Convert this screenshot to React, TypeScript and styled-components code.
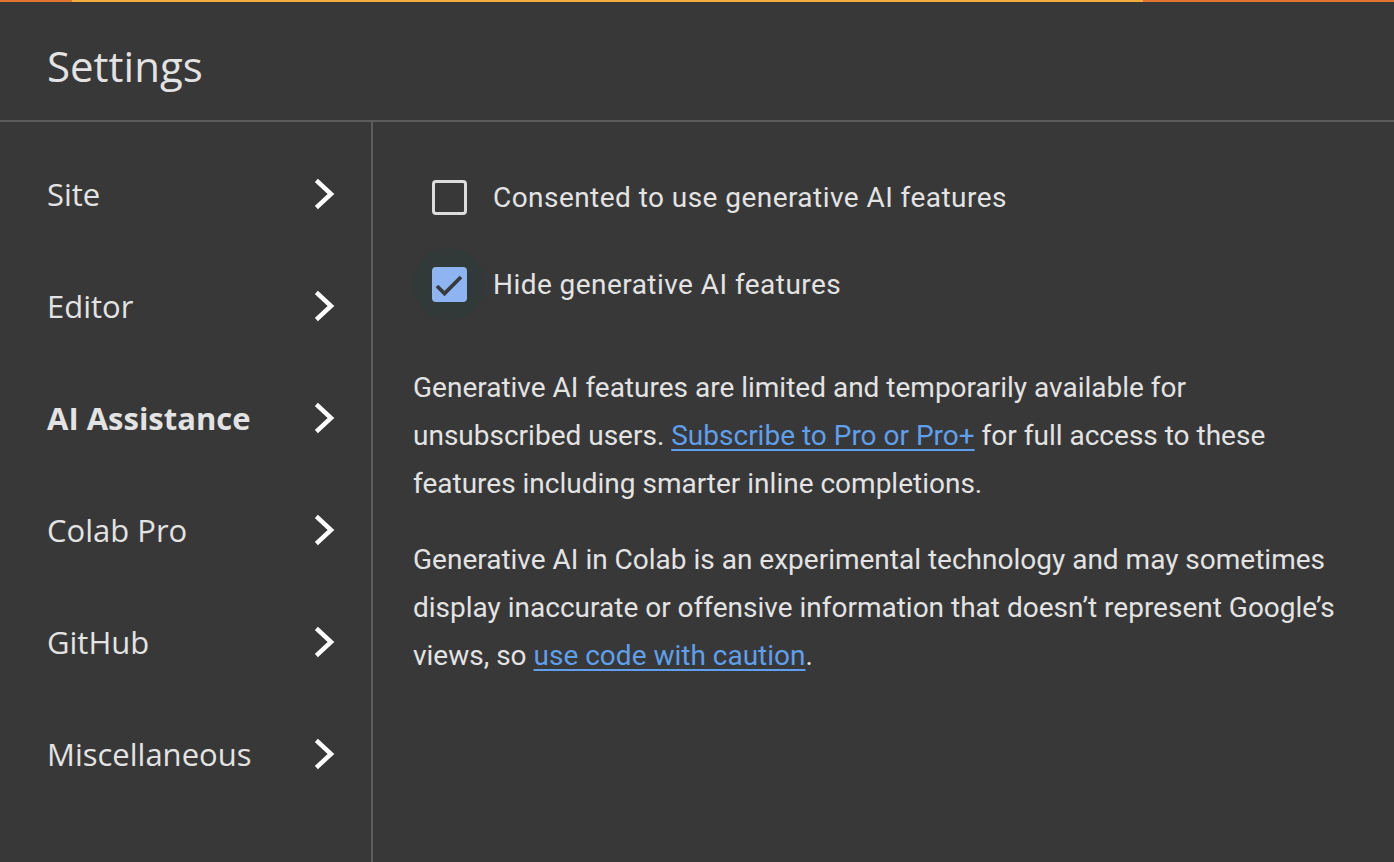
import React from 'react'
import styled, { createGlobalStyle } from 'styled-components'

const GlobalStyle = createGlobalStyle`
    html, body {
        margin: 0;
        padding: 0;
        background: #383838;
    }
    body {
        font-family: Roboto, "Liberation Sans", sans-serif;
        color: #e3e3e3;
    }
`

const Page = styled.div`
    display: flex;
    flex-direction: column;
    width: 1394px;
    height: 862px;
    overflow: hidden;
    background: #383838;
`

const TopBar = styled.div`
    display: flex;
    height: 2px;
    flex-shrink: 0;
`

const BarSegment = styled.div<{ $color: string; $width?: number }>`
    background: ${(p) => p.$color};
    ${(p) => (p.$width ? `width: ${p.$width}px;` : 'flex: 1;')}
`

const Header = styled.header`
    display: flex;
    align-items: center;
    height: 120px;
    box-sizing: border-box;
    padding: 8px 0 0 47px;
    border-bottom: 2px solid #5c5c5c;
    flex-shrink: 0;
`

const Title = styled.h1`
    margin: 0;
    font-family: "Open Sans", sans-serif;
    font-size: 42px;
    font-weight: 400;
    color: #e3e3e3;
`

const Body = styled.div`
    display: flex;
    flex: 1;
`

const Sidebar = styled.nav`
    display: flex;
    flex-direction: column;
    width: 373px;
    padding-top: 16px;
    border-right: 2px solid #5c5c5c;
    box-sizing: border-box;
    flex-shrink: 0;
`

const NavItem = styled.div<{ $active?: boolean }>`
    display: flex;
    align-items: center;
    justify-content: space-between;
    height: 112px;
    padding: 0 36px 0 47px;
    font-family: "Open Sans", sans-serif;
    font-size: 31px;
    font-weight: ${(p) => (p.$active ? 700 : 400)};
    color: #e3e3e3;
`

const Content = styled.main`
    display: flex;
    flex-direction: column;
    padding: 39px 40px 0 40px;
    flex: 1;
`

const CheckRow = styled.label`
    display: flex;
    align-items: center;
    height: 72px;
    gap: 8px;
    margin-bottom: 15px;
    font-size: 28px;
    color: #e3e3e3;
    letter-spacing: 0.45px;
`

const Ripple = styled.span<{ $hover?: boolean }>`
    display: flex;
    align-items: center;
    justify-content: center;
    width: 72px;
    height: 72px;
    border-radius: 50%;
    background: ${(p) => (p.$hover ? '#313939' : 'transparent')};
`

const Box = styled.span<{ $checked?: boolean }>`
    display: flex;
    align-items: center;
    justify-content: center;
    width: 35px;
    height: 35px;
    box-sizing: border-box;
    border-radius: 4px;
    border: ${(p) => (p.$checked ? 'none' : '3.5px solid #dcdcdc')};
    background: ${(p) => (p.$checked ? '#8fb4f2' : 'transparent')};
`

const Paragraph = styled.p`
    margin: 0 0 28px;
    font-size: 28px;
    line-height: 48px;
    color: #e3e3e3;
`

const FirstParagraph = styled(Paragraph)`
    margin-top: 29px;
`

const Link = styled.a`
    color: #5f9fec;
    text-decoration: underline;
    text-underline-offset: 4px;
    text-decoration-thickness: 2px;
`

const Chevron = () => (
    <svg width="20" height="32" viewBox="0 0 20 32">
        <polyline
            points="3,4 16,16 3,28"
            fill="none"
            stroke="#ffffff"
            strokeWidth="4.5"
            strokeLinecap="square"
        />
    </svg>
)

const Check = () => (
    <svg width="35" height="35" viewBox="0 0 35 35">
        <polyline
            points="5,19 12.5,26.5 29,10"
            fill="none"
            stroke="#383b3e"
            strokeWidth="3.8"
        />
    </svg>
)

const navItems = ['Site', 'Editor', 'AI Assistance', 'Colab Pro', 'GitHub', 'Miscellaneous']

export default function App() {
    return (
        <Page>
            <GlobalStyle />
            <TopBar>
                <BarSegment $color="#e0762f" $width={72} />
                <BarSegment $color="#f2ad3d" />
                <BarSegment $color="#e0762f" $width={251} />
            </TopBar>
            <Header>
                <Title>Settings</Title>
            </Header>
            <Body>
                <Sidebar>
                    {navItems.map((item) => (
                        <NavItem key={item} $active={item === 'AI Assistance'}>
                            <span>{item}</span>
                            <Chevron />
                        </NavItem>
                    ))}
                </Sidebar>
                <Content>
                    <CheckRow>
                        <Ripple>
                            <Box />
                        </Ripple>
                        Consented to use generative AI features
                    </CheckRow>
                    <CheckRow>
                        <Ripple $hover>
                            <Box $checked>
                                <Check />
                            </Box>
                        </Ripple>
                        Hide generative AI features
                    </CheckRow>
                    <FirstParagraph>
                        Generative AI features are limited and temporarily available for
                        unsubscribed users. <Link href="#">Subscribe to Pro or Pro+</Link> for
                        full access to these features including smarter inline completions.
                    </FirstParagraph>
                    <Paragraph>
                        Generative AI in Colab is an experimental technology and may sometimes
                        display inaccurate or offensive information that doesn’t represent
                        Google’s views, so <Link href="#">use code with caution</Link>.
                    </Paragraph>
                </Content>
            </Body>
        </Page>
    )
}
